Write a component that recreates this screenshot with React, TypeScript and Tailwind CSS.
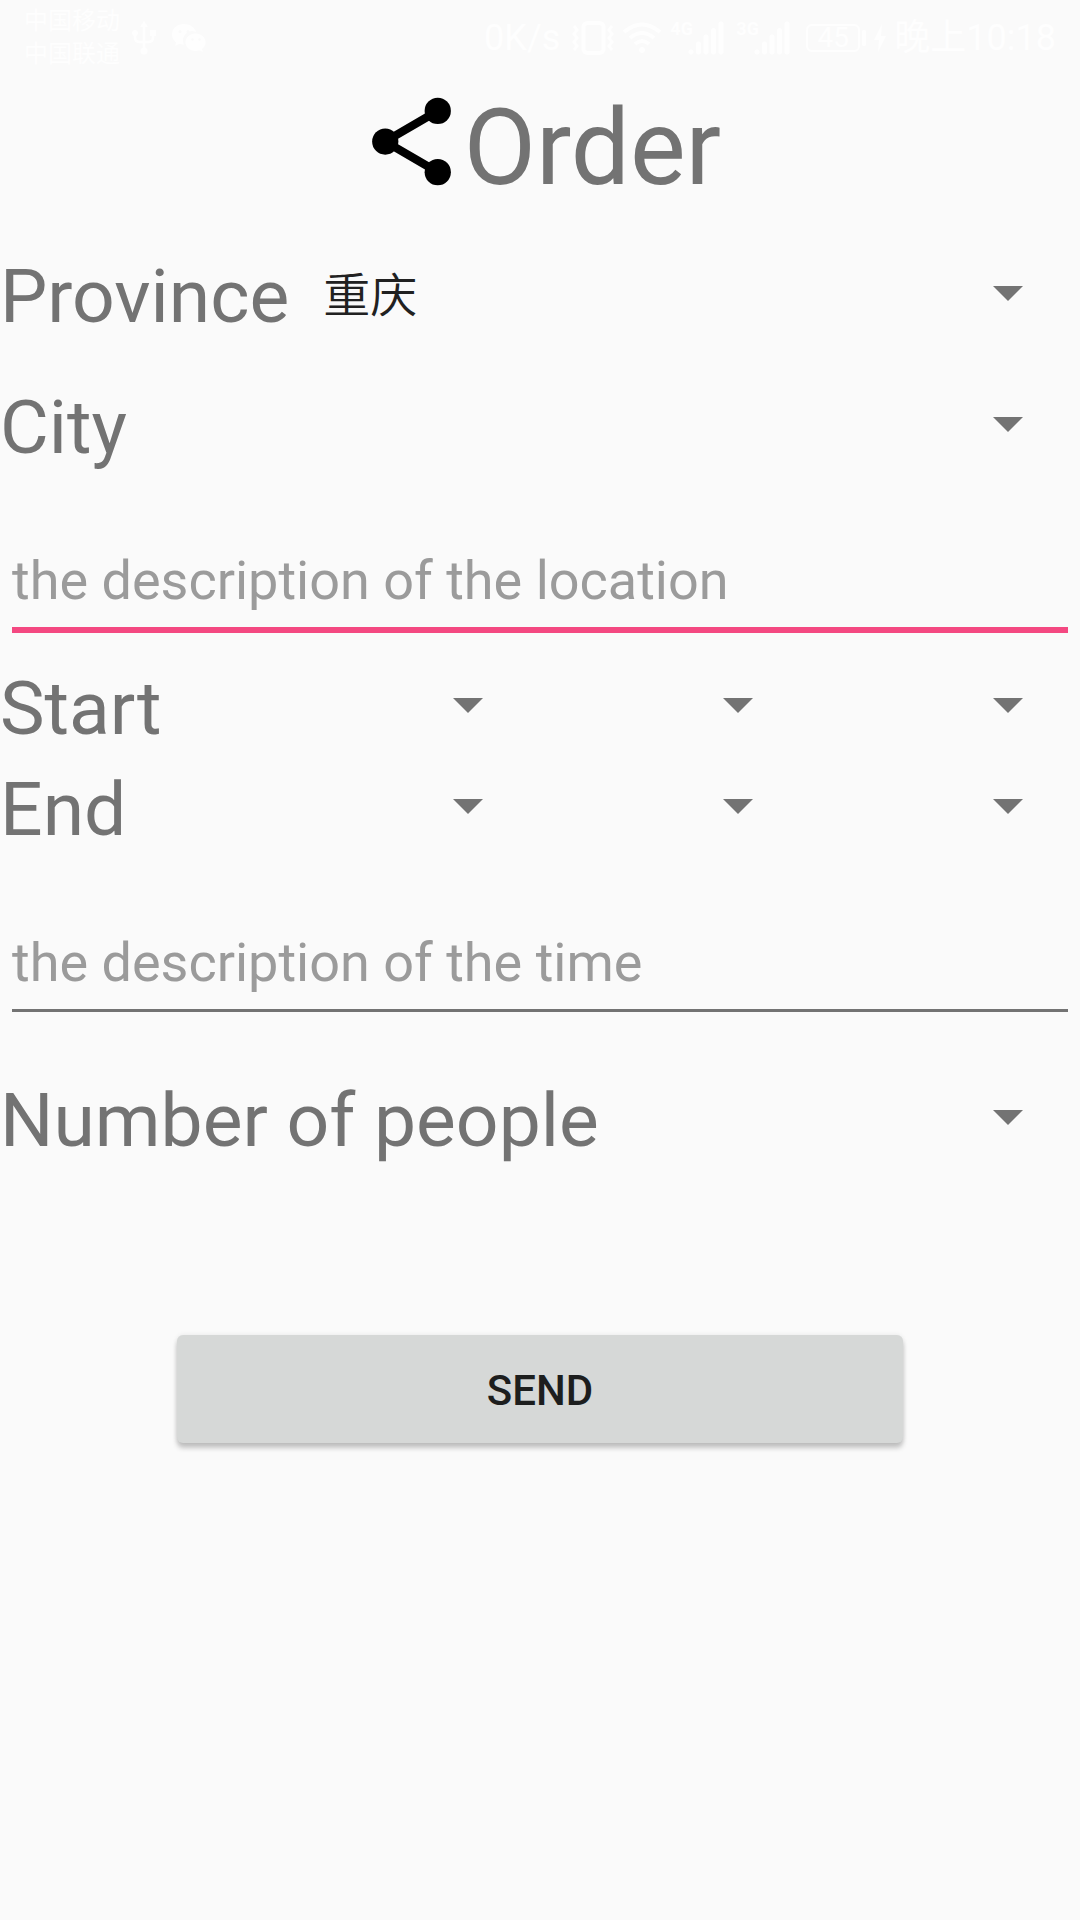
import React from "react";

function Spinner({ label, id, options = [""], className = "" }: { label?: string; id?: string; options?: string[]; className?: string }) {
  return (
    <div className={`relative h-[101px] min-w-0 ${className}`}>
      <select
        id={id}
        aria-label={label}
        className="h-full w-full appearance-none bg-transparent pr-24 pl-[34px] text-[47px] font-[350] text-[#212121] outline-none"
      >
        {options.map((o) => (
          <option key={o} value={o}>{o}</option>
        ))}
      </select>
      <svg aria-hidden="true" viewBox="0 0 30 15" className="pointer-events-none absolute top-10 right-[57px] h-[15px] w-[30px]">
        <path d="M0 0h30L15 15z" fill="#737373" />
      </svg>
    </div>
  );
}

const labelClass = "text-[75px] leading-[101px] whitespace-nowrap";

function DateRow({ name }: { name: string }) {
  return (
    <div role="group" aria-label={name} className="grid grid-cols-4">
      <span className={labelClass}>{name}</span>
      <Spinner label={`${name} month`} />
      <Spinner label={`${name} day`} />
      <Spinner label={`${name} hour`} />
    </div>
  );
}

function Signal({ type }: { type: string }) {
  return (
    <div className="flex h-[34px]">
      <span className="w-[18px] text-lg leading-4 font-bold">{type}</span>
      <svg aria-hidden="true" viewBox="0 0 36 34" className="h-[34px] w-9" stroke="currentColor" strokeWidth="5" strokeLinecap="round">
        <path d="M3 31v0M10.500 23v8M18 16v15M25.500 9.500v21.500M33 3v28" />
      </svg>
    </div>
  );
}

function StatusBar() {
  return (
    <div className="flex h-[72px] items-center justify-between pt-1 pr-6 pl-6 text-[#fefefe]">
      <div className="flex items-center gap-3">
        <div className="text-2xl leading-[33px]">
          <div>中国移动</div>
          <div>中国联通</div>
        </div>
        <svg aria-hidden="true" viewBox="0 0 24 34" className="h-[34px] w-6" fill="none" stroke="currentColor" strokeWidth="2.500">
          <path d="M12 4v26M3 13v4q0 4 5 4h8q5 0 5-4v-4" />
          <path d="M12 0l4 6H8z" fill="currentColor" stroke="none" />
          <circle cx="3" cy="12" r="3" fill="currentColor" stroke="none" />
          <circle cx="12" cy="30" r="3.500" fill="currentColor" stroke="none" />
          <path d="M18 9h6v6h-6z" fill="currentColor" stroke="none" />
        </svg>
        <svg aria-hidden="true" viewBox="0 0 34 28" className="ml-1 h-7 w-[34px]" fill="currentColor">
          <path d="M12 0C5 0 0 4.500 0 10.500c0 3 1.600 6 4 8L3 22l4.500-2.300c1.500.5 3 .7 4.500.7A9 9 0 0 1 24 8.200C22.700 3 17.500 0 12 0Z" />
          <path d="M23.500 9.500c-5.500 0-10 3.700-10 8.700s4.500 8.700 10 8.700c1.500 0 2.700-.2 4-.7l3.500 1.800-1-3c2.200-1.600 3.600-4 3.600-6.800 0-5-4.500-8.700-10.100-8.700Z" />
          <g fill="#fafafa">
            <circle cx="8" cy="7.500" r="1.500" />
            <circle cx="16" cy="7.500" r="1.500" />
            <circle cx="20.500" cy="15.500" r="1.300" />
            <circle cx="27.500" cy="15.500" r="1.300" />
          </g>
        </svg>
      </div>
      <div className="flex items-center">
        <span className="text-4xl">0K/s</span>
        <svg aria-hidden="true" viewBox="0 0 42 34" className="ml-3 h-[34px] w-[42px]" fill="none" stroke="currentColor" strokeWidth="3">
          <rect x="11.500" y="2" width="20" height="30" rx="4" strokeWidth="4" />
          <path d="M2 5l3 4-3 4 3 4-3 4 3 4-3 4M40 5l-3 4 3 4-3 4 3 4-3 4 3 4" />
        </svg>
        <svg aria-hidden="true" viewBox="0 0 40 34" className="ml-2 h-[34px] w-10" fill="none" stroke="currentColor" strokeWidth="4">
          <path d="M2 11q18-15 36 0M8 17q12-10 24 0M13 23q7-6 14 0" />
          <circle cx="20" cy="29" r="3" fill="currentColor" stroke="none" />
        </svg>
        <div className="ml-2 flex gap-3">
          <Signal type="4G" />
          <Signal type="3G" />
        </div>
        <div className="ml-4 flex items-center gap-0.5">
          <span className="flex h-7 w-[54px] items-center justify-center rounded-md border-2 border-current text-[28px] leading-none">45</span>
          <span className="h-4 w-1 rounded-sm bg-current" />
        </div>
        <svg aria-hidden="true" viewBox="0 0 12 28" className="ml-2 h-7 w-3" fill="currentColor">
          <path d="M8 0L0 16h5L4 28l8-16H7z" />
        </svg>
        <span className="ml-2 text-4xl whitespace-nowrap">晚上10:18</span>
      </div>
    </div>
  );
}

const inputClass =
  "mx-3 mt-[71px] block bg-transparent p-0 pb-[14px] text-[54px] leading-[64px] text-[#212121] outline-none placeholder:text-[#9b9b9b] placeholder:opacity-100";

export default function App() {
  return (
    <div className="min-h-screen bg-[#fafafa] font-[Roboto,'Noto_Sans_CJK_SC',sans-serif] text-[#737373]">
      <StatusBar />
      <header className="flex items-start justify-center pt-[17px]">
        <svg aria-hidden="true" viewBox="0 0 24 24" className="size-[105px] text-black" fill="currentColor">
          <path d="M18 5L6 12l12 7" fill="none" stroke="currentColor" strokeWidth="1.900" />
          <circle cx="18" cy="5" r="3" />
          <circle cx="6" cy="12" r="3" />
          <circle cx="18" cy="19" r="3" />
        </svg>
        <h1 className="text-[105px] leading-[120px]">Order</h1>
      </header>
      <form className="mt-[37px] flex flex-col" onSubmit={(e) => e.preventDefault()}>
        <div className="flex">
          <label htmlFor="province" className={labelClass}>Province</label>
          <Spinner id="province" options={["重庆"]} className="flex-1" />
        </div>
        <div className="mt-[30px] flex">
          <label htmlFor="city" className={labelClass}>City</label>
          <Spinner id="city" className="flex-1" />
        </div>
        <input
          type="text"
          aria-label="the description of the location"
          placeholder="the description of the location"
          className={`${inputClass} border-b-6 border-[#f44881]`}
        />
        <div className="mt-[25px]">
          <DateRow name="Start" />
          <DateRow name="End" />
        </div>
        <input
          type="text"
          aria-label="the description of the time"
          placeholder="the description of the time"
          className={`${inputClass} border-b-3 border-[#737373]`}
        />
        <div className="mt-[58px] flex">
          <label htmlFor="people" className={labelClass}>Number of people</label>
          <Spinner id="people" className="flex-1" />
        </div>
        <button
          type="submit"
          className="mx-auto mt-[164px] h-[108px] w-[67.2%] rounded-md bg-[#d6d8d7] pt-0.5 text-[42px] font-medium text-[#1d1e1e] shadow-[0_5px_5px_rgba(0,0,0,0.22),0_0_5px_rgba(0,0,0,0.08)]"
        >
          SEND
        </button>
      </form>
    </div>
  );
}
